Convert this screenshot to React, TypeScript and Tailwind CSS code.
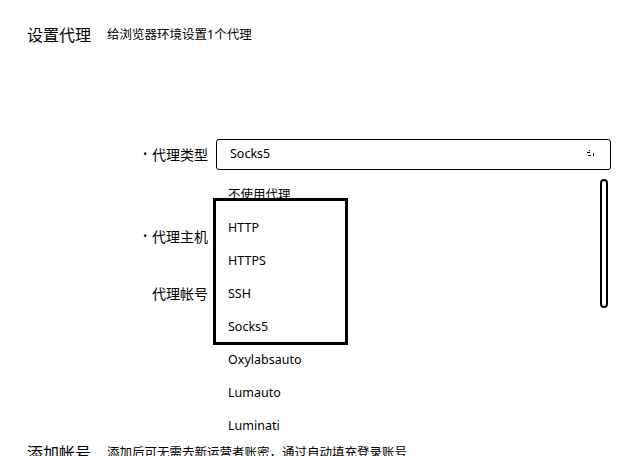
import React from "react";

const items = ["不使用代理", "HTTP", "HTTPS", "SSH", "Socks5", "Oxylabsauto", "Lumauto", "Luminati"];

export default function App() {
  return (
    <div
      className="relative w-[640px] h-[456px] overflow-hidden bg-white text-black"
      style={{ fontFamily: '"Noto Sans", "Noto Sans CJK SC", sans-serif' }}
    >
      <div className="flex items-center pt-[26px] pl-[27px] h-[44px]">
        <span className="text-[16px] leading-[18px]">设置代理</span>
        <span className="ml-[16px] text-[12.5px] leading-[16px]">给浏览器环境设置1个代理</span>
      </div>

      <div className="mt-[95px] flex flex-col">
        <div className="flex items-center h-[31px]">
          <div className="w-[208px] text-[14px] flex justify-end items-center">
            <span className="mr-[5px] text-[10px]">•</span>
            <span>代理类型</span>
          </div>
          <div className="relative ml-[8px] w-[395px] h-[31px]">
            <div className="w-full h-full border border-black rounded-[3px] flex items-center justify-between pl-[13px] pr-[14px]">
              <span className="text-[12.5px]">Socks5</span>
              <svg width="9" height="8" viewBox="0 0 9 8" className="mb-[1px]">
                <rect x="2" y="0" width="1" height="1" fill="black" />
                <rect x="0" y="2" width="3" height="1" fill="black" />
                <rect x="1" y="5" width="3" height="1" fill="black" />
                <rect x="6" y="3" width="1" height="3" fill="black" />
              </svg>
            </div>
            <div className="absolute left-0 top-[40px] w-full bg-transparent">
              <div className="flex flex-col">
                {items.map((it) => (
                  <div key={it} className="h-[33px] flex items-center pl-[12px] text-[12.5px]">
                    {it}
                  </div>
                ))}
              </div>
            </div>
            <div className="absolute right-[3px] top-[40px] w-[8px] h-[129px] border-2 border-black rounded-full bg-white" />
            <div className="absolute left-[-3px] top-[59px] w-[135px] h-[147px] border-[3px] border-black" />
          </div>
        </div>

        <div className="flex items-center h-[31px] mt-[51px]">
          <div className="w-[208px] text-[14px] flex justify-end items-center">
            <span className="mr-[5px] text-[10px]">•</span>
            <span>代理主机</span>
          </div>
        </div>

        <div className="flex items-center h-[31px] mt-[26px]">
          <div className="w-[208px] text-[14px] flex justify-end items-center">
            <span>代理帐号</span>
          </div>
        </div>
      </div>

      <div className="flex items-center pl-[27px] mt-[135px]">
        <span className="text-[16px] leading-[18px]">添加帐号</span>
        <span className="ml-[16px] text-[12.5px] leading-[16px]">添加后可无需去新运营者账密，通过自动填充登录账号</span>
      </div>
    </div>
  );
}
